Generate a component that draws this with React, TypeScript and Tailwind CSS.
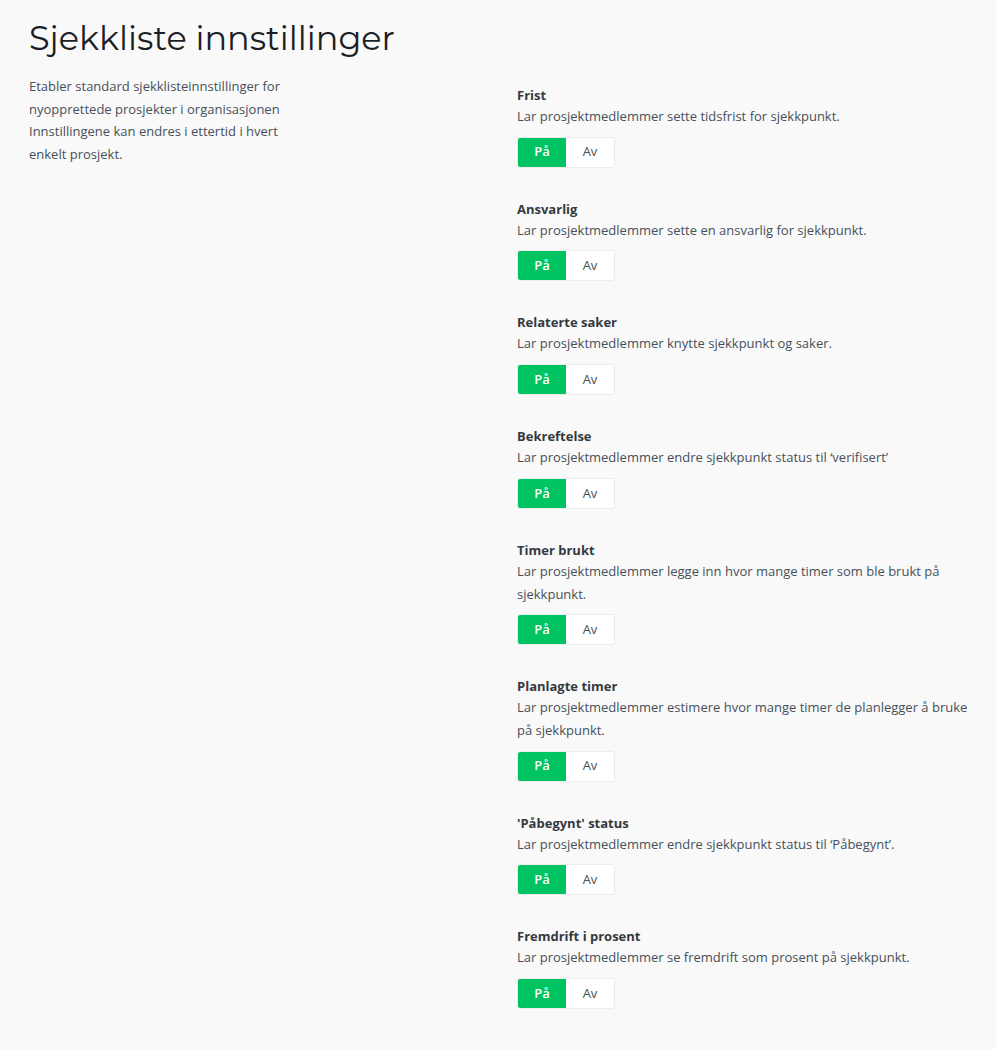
import { useState } from "react";

const settings = [
  { title: "Frist", desc: "Lar prosjektmedlemmer sette tidsfrist for sjekkpunkt." },
  { title: "Ansvarlig", desc: "Lar prosjektmedlemmer sette en ansvarlig for sjekkpunkt." },
  { title: "Relaterte saker", desc: "Lar prosjektmedlemmer knytte sjekkpunkt og saker." },
  { title: "Bekreftelse", desc: "Lar prosjektmedlemmer endre sjekkpunkt status til ‘verifisert’" },
  { title: "Timer brukt", desc: "Lar prosjektmedlemmer legge inn hvor mange timer som ble brukt på sjekkpunkt." },
  { title: "Planlagte timer", desc: "Lar prosjektmedlemmer estimere hvor mange timer de planlegger å bruke på sjekkpunkt." },
  { title: "'Påbegynt' status", desc: "Lar prosjektmedlemmer endre sjekkpunkt status til ‘Påbegynt’." },
  { title: "Fremdrift i prosent", desc: "Lar prosjektmedlemmer se fremdrift som prosent på sjekkpunkt." },
];

const Toggle = ({ on, onChange }: { on: boolean; onChange: (v: boolean) => void }) => (
  <div className="flex w-[98px] h-[31px] rounded-[3px] overflow-hidden border border-[#ececec] bg-white text-[13px]">
    <button
      onClick={() => onChange(true)}
      className={`w-[48px] h-full ${on ? "bg-[#00c462] text-white font-semibold" : "text-[#495057]"}`}
    >
      På
    </button>
    <button
      onClick={() => onChange(false)}
      className={`flex-1 h-full ${!on ? "bg-[#00c462] text-white font-semibold" : "text-[#495057]"}`}
    >
      Av
    </button>
  </div>
);

export default function App() {
  const [values, setValues] = useState<boolean[]>(settings.map(() => true));

  return (
    <div className="min-h-screen bg-[#f9f9f9] pl-[29px] pr-[14px] pt-[14px] pb-8 text-[#3d4650] font-['Open_Sans',sans-serif]">
      <h1 className="text-[33.5px] leading-[48px] text-[#1b1e24] font-['Montserrat',Inter,sans-serif] font-normal">
        Sjekkliste innstillinger
      </h1>
      <div className="flex mt-[13px]">
        <div className="w-[488px] shrink-0">
          <p className="w-[275px] text-[13px] leading-[22.7px] text-[#47505a]">
            Etabler standard sjekklisteinnstillinger for nyopprettede prosjekter i organisasjonen Innstillingene kan endres i ettertid i hvert enkelt prosjekt.
          </p>
        </div>
        <div className="flex-1 flex flex-col gap-[31px] pt-[10px]">
          {settings.map((s, i) => (
            <div key={s.title}>
              <div className="text-[13px] leading-[20px] font-bold text-[#343a40]">{s.title}</div>
              <p className="text-[13px] leading-[22.7px] text-[#47505a]">{s.desc}</p>
              <div className="mt-[9px]">
                <Toggle
                  on={values[i]}
                  onChange={(v) => setValues((prev) => prev.map((x, j) => (j === i ? v : x)))}
                />
              </div>
            </div>
          ))}
        </div>
      </div>
    </div>
  );
}
